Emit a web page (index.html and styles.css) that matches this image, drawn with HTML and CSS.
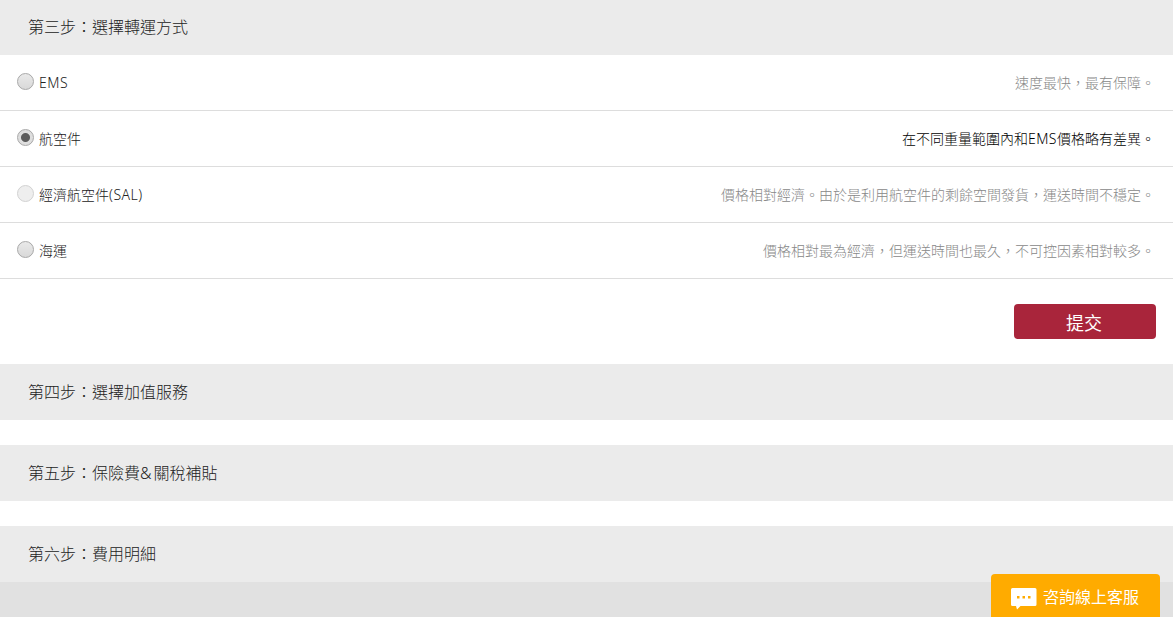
FILE: index.html
```html
<!DOCTYPE html>
<html lang="zh-TW">
  <head>
    <meta charset="UTF-8" />
    <meta name="viewport" content="width=device-width, initial-scale=1.0" />
    <title>選擇轉運方式</title>
    <link rel="stylesheet" href="styles.css">
  </head>
  <body>
    <div class="steps">
      <h3 class="step-title step-title-first">第三步：選擇轉運方式</h3>
      <form class="ship-form">
        <ul class="ship-list">
          <li class="ship-item">
            <label class="ship-label"><input type="radio" name="ship" class="ship-radio" /><span class="latin">EMS</span></label>
            <span class="ship-desc">速度最快，最有保障。</span>
          </li>
          <li class="ship-item active">
            <label class="ship-label"><input type="radio" name="ship" class="ship-radio" checked />航空件</label>
            <span class="ship-desc">在不同重量範圍內和<span class="latin">EMS</span>價格略有差異。</span>
          </li>
          <li class="ship-item">
            <label class="ship-label"><input type="radio" name="ship" class="ship-radio" disabled />經濟航空件<span class="latin">(SAL)</span></label>
            <span class="ship-desc">價格相對經濟。由於是利用航空件的剩餘空間發貨，運送時間不穩定。</span>
          </li>
          <li class="ship-item">
            <label class="ship-label"><input type="radio" name="ship" class="ship-radio" />海運</label>
            <span class="ship-desc">價格相對最為經濟，但運送時間也最久，不可控因素相對較多。</span>
          </li>
        </ul>
        <div class="ship-action">
          <button type="button" class="btn-submit">提交</button>
        </div>
      </form>
      <h3 class="step-title">第四步：選擇加值服務</h3>
      <h3 class="step-title">第五步：保險費<span class="amp">&amp;</span>關稅補貼</h3>
      <h3 class="step-title step-title-last">第六步：費用明細</h3>
    </div>
    <div class="footer"></div>

    <!-- 線上客服 -->
    <a href="#" class="service">
      <svg class="service-icon" width="26" height="22" viewBox="0 0 26 22">
        <path fill="#fff" d="M1.500 0h22.500a1.500 1.500 0 0 1 1.500 1.500v15a1.500 1.500 0 0 1-1.500 1.500H9.500L6 21.500 5 18H1.500A1.500 1.500 0 0 1 0 16.500v-15A1.500 1.500 0 0 1 1.500 0z" />
        <path fill="#ffab00" d="M6 8h2.500v2.500H6zM11.500 8h2.500v2.500h-2.500zM17 8h2.500v2.500H17z" />
      </svg>
      <span>咨詢線上客服</span>
    </a>
  </body>
</html>
```

FILE: styles.css
```css
* {
  box-sizing: border-box;
}

body {
  margin: 0;
  height: 617px;
  overflow: hidden;
  font-family: "Noto Sans", "Noto Sans CJK TC", sans-serif;
  font-size: 14px;
  font-weight: 300;
  color: #222;
  background: #fff;
}

.step-title {
  height: 56px;
  margin: 0 0 25px;
  padding-left: 28px;
  font-size: 16px;
  font-weight: 300;
  line-height: 56px;
  background: #ebebeb;
}

.step-title-first {
  height: 55px;
  margin-bottom: 0;
  line-height: 54px;
}

.step-title-last {
  margin-bottom: 0;
}

.latin {
  letter-spacing: 0.5px;
}

.amp {
  letter-spacing: 2px;
}

.ship-list {
  margin: 0;
  padding: 0;
  list-style: none;
}

.ship-item {
  display: flex;
  align-items: center;
  justify-content: space-between;
  height: 56px;
  padding: 0 18px 0 17px;
  border-bottom: 1px solid #ddd;
  line-height: 20px;
}

.ship-label {
  display: flex;
  align-items: center;
  height: 55px;
}

.ship-radio {
  appearance: none;
  width: 17px;
  height: 17px;
  margin: 0 5px 2px 0;
  border: 1px solid #a8a8a8;
  border-radius: 50%;
  background: linear-gradient(#e9e9e9, #d9d9d9);
}

.ship-radio:checked {
  background: radial-gradient(circle, #5c5c5c 4px, #dedede 5px);
}

.ship-radio:disabled {
  border-color: #d2d2d2;
  background: #eee;
}

.ship-desc {
  color: #888;
}

.ship-item.active .ship-desc {
  color: #000;
}

.ship-action {
  display: flex;
  justify-content: flex-end;
  padding: 25px 17px;
}

.btn-submit {
  width: 142px;
  height: 35px;
  padding: 3px 2px 0 0;
  border: 0;
  border-radius: 4px;
  font-family: inherit;
  font-size: 18px;
  line-height: 32px;
  color: #fff;
  background: #a9253b;
}

.footer {
  height: 35px;
  background: #e1e1e1;
}

.service {
  position: fixed;
  right: 13px;
  bottom: 0;
  display: flex;
  align-items: center;
  width: 169px;
  height: 43px;
  padding-left: 20px;
  border-radius: 4px 4px 0 0;
  font-size: 16px;
  font-weight: 400;
  color: #fff;
  text-decoration: none;
  background: #ffab00;
}

.service-icon {
  margin: 6px 6px 0 0;
}
```
